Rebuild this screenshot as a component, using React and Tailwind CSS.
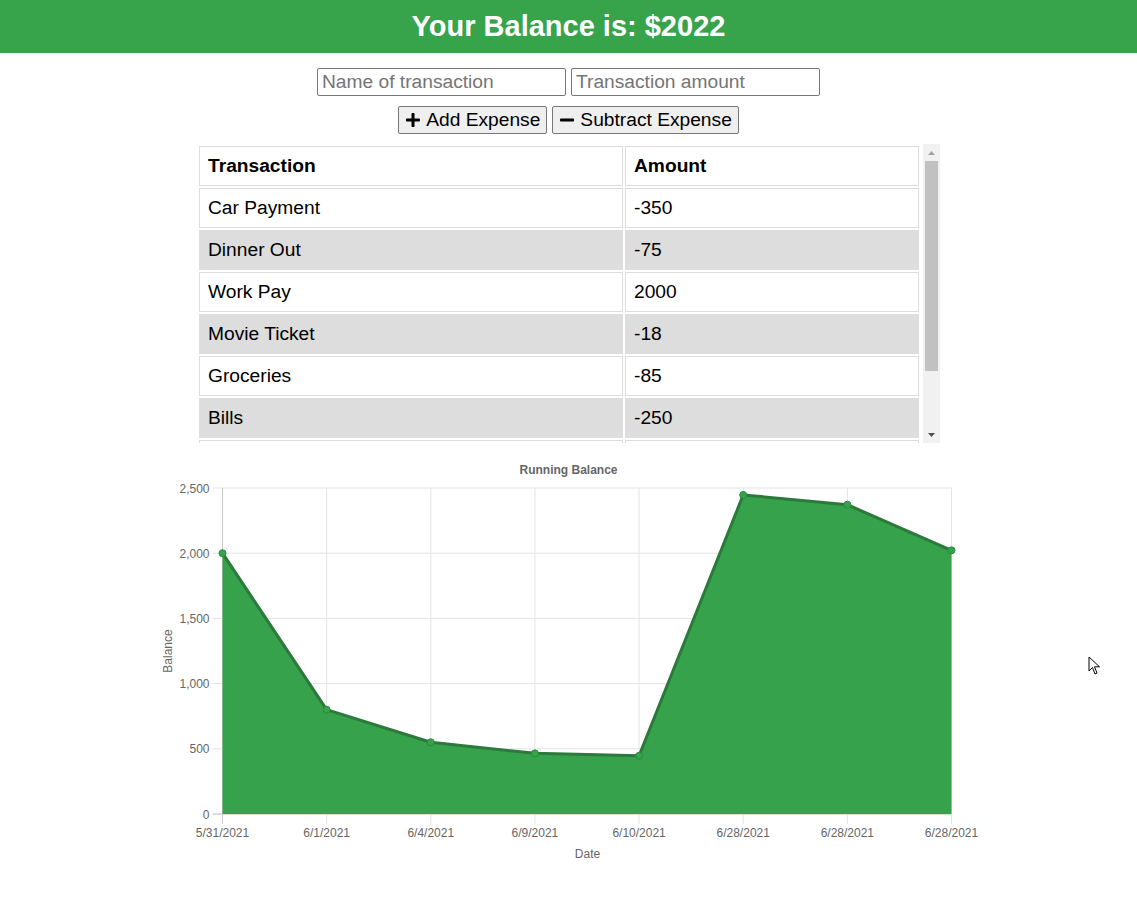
import { FaPlus, FaMinus } from 'react-icons/fa';

const rows = [
  { name: 'Car Payment', value: -350 },
  { name: 'Dinner Out', value: -75 },
  { name: 'Work Pay', value: 2000 },
  { name: 'Movie Ticket', value: -18 },
  { name: 'Groceries', value: -85 },
  { name: 'Bills', value: -250 },
  { name: 'Rent', value: -1200 },
  { name: 'Starting Balance', value: 2000 },
];

const points = [
  { label: '5/31/2021', value: 2000 },
  { label: '6/1/2021', value: 800 },
  { label: '6/4/2021', value: 550 },
  { label: '6/9/2021', value: 465 },
  { label: '6/10/2021', value: 447 },
  { label: '6/28/2021', value: 2447 },
  { label: '6/28/2021', value: 2372 },
  { label: '6/28/2021', value: 2022 },
];

// plot box in page coordinates
const X0 = 222;
const X1 = 951;
const Y0 = 814;
const Y1 = 488;
const xAt = (i) => X0 + ((X1 - X0) * i) / (points.length - 1);
const yAt = (v) => Y0 - ((Y0 - Y1) * v) / 2500;

function Chart() {
  const line = points.map((p, i) => `${xAt(i)},${yAt(p.value)}`).join(' ');
  const area = `${X0},${Y0} ${line} ${X1},${Y0}`;
  const ticks = [0, 500, 1000, 1500, 2000, 2500];

  return (
    <svg width="838" height="420" className="mx-auto mt-[12px] block" style={{ fontFamily: '"Liberation Sans", Arial, sans-serif' }}>
      <g transform="translate(-149.5,-455)">
        <text x="568" y="474" textAnchor="middle" fontSize="12" fontWeight="bold" fill="#666">
          Running Balance
        </text>

        {ticks.map((t) => (
          <g key={t}>
            <line x1="212" x2={X1} y1={yAt(t)} y2={yAt(t)} stroke="#e3e3e3" strokeWidth="1" />
            <text x="209" y={yAt(t) + 4.5} textAnchor="end" fontSize="12" fill="#666">
              {t.toLocaleString('en-US')}
            </text>
          </g>
        ))}

        {points.map((p, i) => (
          <g key={i}>
            <line x1={xAt(i)} x2={xAt(i)} y1={Y1} y2={Y0 + 10} stroke="#e3e3e3" strokeWidth="1" />
            <text x={xAt(i)} y="837" textAnchor="middle" fontSize="12" fill="#666">
              {p.label}
            </text>
          </g>
        ))}

        <line x1={X0} x2={X0} y1={Y1} y2={Y0 + 10} stroke="#c8c8c8" strokeWidth="1" />
        <line x1="212" x2={X1} y1={Y0} y2={Y0} stroke="#c8c8c8" strokeWidth="1" />

        <polygon points={area} fill="#36a24b" />
        <polyline points={line} fill="none" stroke="#2b7a3b" strokeWidth="3" strokeLinejoin="round" />
        {points.map((p, i) => (
          <circle key={i} cx={xAt(i)} cy={yAt(p.value)} r="3.5" fill="#36a24b" stroke="#2b8a3e" strokeWidth="1" />
        ))}

        <text x="587" y="858" textAnchor="middle" fontSize="12" fill="#666">
          Date
        </text>
        <text x="171" y="651" textAnchor="middle" fontSize="12" fill="#666" transform="rotate(-90 171 651)">
          Balance
        </text>
      </g>
    </svg>
  );
}

function FakeScrollbar() {
  return (
    <div className="flex w-[17px] flex-col bg-[#f1f1f1]">
      <div className="flex h-[17px] items-center justify-center">
        <svg width="7" height="4" viewBox="0 0 7 4">
          <polygon points="0,4 3.5,0 7,4" fill="#a3a3a3" />
        </svg>
      </div>
      <div className="mx-[2px] h-[210px] bg-[#c1c1c1]" />
      <div className="flex-1" />
      <div className="flex h-[17px] items-center justify-center">
        <svg width="7" height="4" viewBox="0 0 7 4">
          <polygon points="0,0 7,0 3.5,4" fill="#505050" />
        </svg>
      </div>
    </div>
  );
}

export default function App() {
  return (
    <div className="relative min-h-[915px] bg-white font-['Liberation_Sans',Arial,sans-serif] text-black">
      <header className="flex h-[53px] items-center justify-center bg-[#37a34b]">
        <h1 className="text-[29px] font-bold text-white">Your Balance is: $2022</h1>
      </header>

      <div className="mt-[15px] flex justify-center gap-[5px]">
        <input
          placeholder="Name of transaction"
          className="h-[28px] w-[249px] rounded-[2px] border border-[#767676] px-[4px] text-[19.2px] placeholder:text-[#757575]"
        />
        <input
          placeholder="Transaction amount"
          className="h-[28px] w-[249px] rounded-[2px] border border-[#767676] px-[4px] text-[19.2px] placeholder:text-[#757575]"
        />
      </div>

      <div className="mt-[10px] flex justify-center gap-[5px]">
        <button className="flex h-[28px] items-center gap-[5px] rounded-[2px] border border-[#767676] bg-[#efefef] px-[6px] text-[19.2px]">
          <FaPlus size={16} />
          Add Expense
        </button>
        <button className="flex h-[28px] items-center gap-[5px] rounded-[2px] border border-[#767676] bg-[#efefef] px-[6px] text-[19.2px]">
          <FaMinus size={16} />
          Subtract Expense
        </button>
      </div>

      <div className="mx-auto mt-[10px] flex h-[299px] w-[743px]">
        <div className="w-[726px] overflow-hidden">
          <table className="w-[724px] table-fixed border-separate border-spacing-[2px] text-left text-[19.2px] leading-[22px]">
            <thead>
              <tr>
                <th className="w-[424px] border border-[#dddddd] px-2 py-2 font-bold">Transaction</th>
                <th className="border border-[#dddddd] px-2 py-2 font-bold">Amount</th>
              </tr>
            </thead>
            <tbody>
              {rows.map((r, i) => (
                <tr key={r.name} className={i % 2 === 1 ? 'bg-[#dddddd]' : ''}>
                  <td className="border border-[#dddddd] px-2 py-2">{r.name}</td>
                  <td className="border border-[#dddddd] px-2 py-2">{r.value}</td>
                </tr>
              ))}
            </tbody>
          </table>
        </div>
        <FakeScrollbar />
      </div>

      <Chart />

      <svg className="absolute left-[1088px] top-[656px]" width="13" height="20" viewBox="0 0 13 20">
        <path d="M1 1 L1 15 L4.5 11.5 L7 18 L9 17 L6.5 10.8 L11.5 10.8 Z" fill="#fff" stroke="#000" strokeWidth="1" strokeLinejoin="miter" />
      </svg>
    </div>
  );
}
